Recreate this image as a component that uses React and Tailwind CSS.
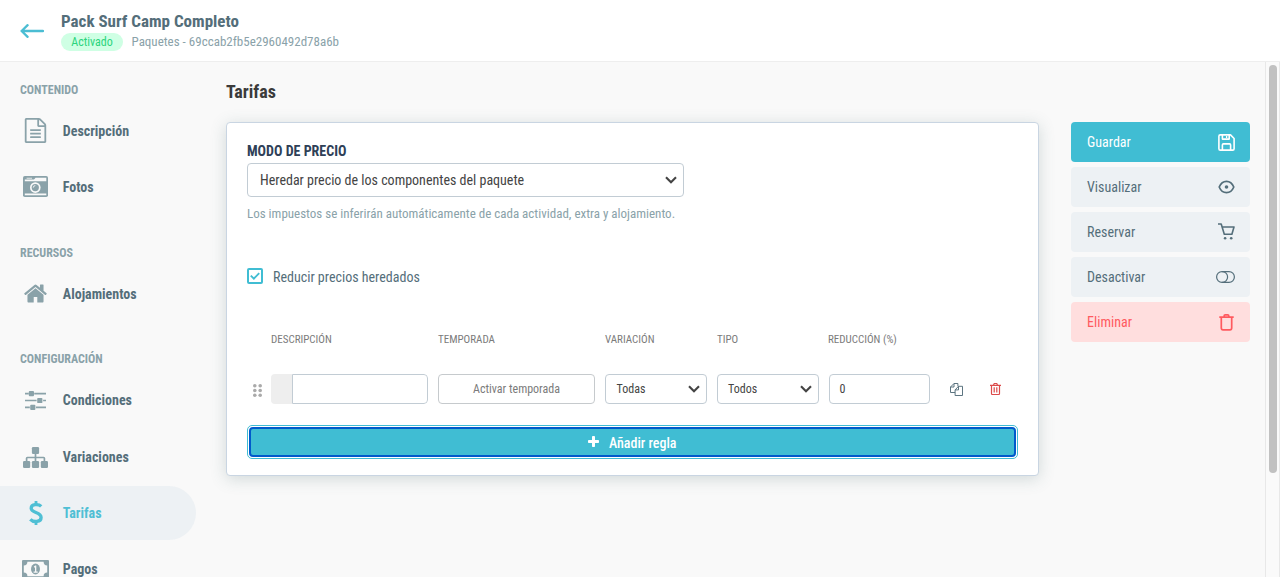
import { useState } from 'react'

const SIDEBAR = [
  {
    title: 'Contenido',
    className: 'h-[163px]',
    items: [
      { label: 'Descripción', icon: FileIcon },
      { label: 'Fotos', icon: CameraIcon },
    ],
  },
  {
    title: 'Recursos',
    className: 'h-[106px]',
    items: [{ label: 'Alojamientos', icon: HomeIcon }],
  },
  {
    title: 'Configuración',
    className: 'h-[250px]',
    items: [
      { label: 'Condiciones', icon: SlidersIcon },
      { label: 'Variaciones', icon: SitemapIcon, className: 'pt-px' },
      { label: 'Tarifas', icon: DollarIcon },
      { label: 'Pagos', icon: MoneyIcon },
    ],
  },
]

const ACTIONS = [
  { label: 'Guardar', icon: SaveIcon, className: 'bg-[#40bdd3] text-white' },
  { label: 'Visualizar', icon: EyeIcon, className: 'bg-[#edf1f4] text-[#546e7a]' },
  { label: 'Reservar', icon: CartIcon, className: 'bg-[#edf1f4] text-[#546e7a]' },
  { label: 'Desactivar', icon: ToggleIcon, className: 'bg-[#edf1f4] text-[#546e7a]' },
  { label: 'Eliminar', icon: TrashIcon, className: 'bg-[#ffdede] text-[#ff5a5f]' },
]

function FileIcon() {
  return (
    <svg width="25" height="25" viewBox="0 0 1792 1792" fill="currentColor" className="-mt-px">
      <path d="M1596 380q28 28 48 76t20 88v1152q0 40-28 68t-68 28H224q-40 0-68-28t-28-68V96q0-40 28-68T224 0h896q40 0 88 20t76 48zm-444-244v376h376q-10-29-22-41l-313-313q-12-12-41-22zm384 1528V640h-416q-40 0-68-28t-28-68V128H256v1536h1280zM512 832q0-14 9-23t23-9h704q14 0 23 9t9 23v64q0 14-9 23t-23 9H544q-14 0-23-9t-9-23v-64zm736 224q14 0 23 9t9 23v64q0 14-9 23t-23 9H544q-14 0-23-9t-9-23v-64q0-14 9-23t23-9h704zm0 256q14 0 23 9t9 23v64q0 14-9 23t-23 9H544q-14 0-23-9t-9-23v-64q0-14 9-23t23-9h704z" />
    </svg>
  )
}

function CameraIcon() {
  return (
    <svg width="25" height="21" viewBox="0 0 25 21" fill="none" className="-mt-0.5">
      <rect width="25" height="21" rx="1.8" fill="currentColor" />
      <path d="M1.8 3.6H11L12.6 1.8H23.3V5.3H1.8zM1.8 17.6H23.3V19.2H1.8z" fill="#f9f9f9" />
      <path d="M3.6 1.8H9V2.6H3.6z" fill="#f9f9f9" />
      <circle cx="12.3" cy="11.6" r="5.3" fill="#f9f9f9" />
      <circle cx="12.3" cy="11.6" r="3.6" fill="currentColor" />
      <path d="M10.3 11.6a2 2 0 0 1 2-2" stroke="#f9f9f9" strokeWidth="0.9" />
    </svg>
  )
}

function HomeIcon() {
  return (
    <svg width="25" height="25" viewBox="0 0 1792 1792" fill="currentColor" className="-mt-0.5">
      <path d="M1472 992v480q0 26-19 45t-45 19h-384v-384H768v384H384q-26 0-45-19t-19-45V992q0-1 .5-3t.5-3l575-474 575 474q1 2 1 6zm223-69l-62 74q-8 9-21 11h-3q-13 0-21-7L896 424l-692 577q-12 8-24 7-13-2-21-11l-62-74q-8-10-7-23.5t11-21.5l719-599q32-26 76-26t76 26l244 204V288q0-14 9-23t23-9h192q14 0 23 9t9 23v408l219 182q10 8 11 21.5t-7 23.5z" />
    </svg>
  )
}

function SlidersIcon() {
  return (
    <svg width="21" height="19" viewBox="0 0 21 19" fill="currentColor">
      <path d="M0 1.8h3.8v1.6H0zM9.2 1.8H21v1.6H9.2zM0 8.7h11.6v1.6H0zM18.1 8.7H21v1.6h-2.9zM0 15.6h4.8v1.6H0zM11 15.6h10v1.6H11z" />
      <rect x="3.8" width="5.2" height="5.2" rx="0.9" />
      <rect x="12.2" y="6.9" width="5.2" height="5.2" rx="0.9" />
      <rect x="5.2" y="13.8" width="5.2" height="5.2" rx="0.9" />
    </svg>
  )
}

function SitemapIcon() {
  return (
    <svg width="25" height="21" viewBox="0 0 25 21" fill="currentColor">
      <rect x="8.9" width="7.2" height="7" rx="1.2" />
      <rect y="14" width="7.2" height="7" rx="1.2" />
      <rect x="8.9" y="14" width="7.2" height="7" rx="1.2" />
      <rect x="17.8" y="14" width="7.2" height="7" rx="1.2" />
      <path d="M12.5 6v9M3.6 15v-3.7q0-.8.8-.8h16.2q.8 0 .8.8V15" fill="none" stroke="currentColor" strokeWidth="1.7" />
    </svg>
  )
}

function DollarIcon() {
  return (
    <svg width="14" height="24" viewBox="0 0 14 24" fill="none" stroke="currentColor" className="-mt-px">
      <path d="M12.2 5.4C9.6 2.8 2.2 2.9 2.2 7.2c0 5 9.9 3.6 9.9 9.2 0 4.8-7.6 5.3-10.8 1.9" strokeWidth="3.3" />
      <path d="M7 0v4M7 20v4" strokeWidth="2.8" />
    </svg>
  )
}

function MoneyIcon() {
  return (
    <svg width="27" height="18" viewBox="0 0 27 18" fill="none" className="-mt-0.5">
      <rect width="27" height="18" rx="1" fill="currentColor" />
      <path d="M5.4 1.8h16.2a3.6 3.6 0 0 0 3.6 3.6v7.2a3.6 3.6 0 0 0-3.6 3.6H5.4a3.6 3.6 0 0 0-3.6-3.6V5.4a3.6 3.6 0 0 0 3.6-3.6z" fill="#f9f9f9" />
      <ellipse cx="13.5" cy="9" rx="4.5" ry="5.4" fill="currentColor" />
      <path d="M11.8 6.8l1.3-1.2h1.2v6h1.4v1.1h-4.1v-1.1h1.4V7.2l-.6.5z" fill="#f9f9f9" />
    </svg>
  )
}

function SaveIcon() {
  return (
    <svg width="17" height="17" viewBox="0 0 17 17" fill="none" stroke="currentColor" strokeWidth="1.6" strokeLinejoin="round">
      <path d="M2.3.9h10.2l3.6 3.6v10.2q0 1.4-1.4 1.4H2.3Q.9 16.1.9 14.7V2.3Q.9.9 2.3.9z" />
      <path d="M4.4 1v4.1h6.8V1M4.4 16v-5.1q0-1 1-1h6.2q1 0 1 1V16" />
      <path d="M8.6 2v2" strokeWidth="1.3" />
    </svg>
  )
}

function EyeIcon() {
  return (
    <svg width="17" height="14" viewBox="0 0 17 14" fill="none" stroke="currentColor" strokeWidth="1.7">
      <path d="M1.2 7C2.7 3.4 5.3 1.3 8.5 1.3S14.3 3.4 15.8 7c-1.5 3.6-4.1 5.7-7.3 5.7S2.7 10.6 1.2 7z" strokeLinejoin="round" />
      <circle cx="8.5" cy="7" r="1.8" fill="currentColor" stroke="none" />
    </svg>
  )
}

function CartIcon() {
  return (
    <svg width="17" height="17" viewBox="0 0 17 17" fill="none" stroke="currentColor" strokeWidth="1.6" className="-mt-px">
      <path d="M0 1h3.2l3.1 10.3h7.6L16 4H4.2" strokeLinejoin="round" />
      <circle cx="7.1" cy="15.2" r="1.3" fill="currentColor" stroke="none" />
      <circle cx="13.2" cy="15.2" r="1.3" fill="currentColor" stroke="none" />
    </svg>
  )
}

function ToggleIcon() {
  return (
    <svg width="19" height="12" viewBox="0 0 19 12" fill="none" stroke="currentColor" strokeWidth="1.2">
      <rect x="0.6" y="0.6" width="17.8" height="10.8" rx="5.4" />
      <path d="M6.2.6a5.4 5.4 0 0 1 0 10.8" />
    </svg>
  )
}

function TrashIcon() {
  return (
    <svg width="15" height="17" viewBox="0 0 15 17" fill="none" stroke="currentColor" strokeWidth="1.7" className="mr-px">
      <path d="M.3 3.2h14.4M2.3 3.2v10.9q0 1.7 1.7 1.7h7q1.7 0 1.7-1.7V3.2M5.2 3.2V1.9q0-1 1-1h2.6q1 0 1 1v1.3" />
    </svg>
  )
}

function CopyIcon() {
  return (
    <svg width="13" height="13" viewBox="0 0 13 13" fill="none" stroke="currentColor" strokeWidth="0.95">
      <path d="M5.1 9.5H.5V4L4 .5h3.9v2.8M4 .5V4H.5" />
      <path d="M5.1 12.5V6.9l3.4-3.6h4v9.2zM8.5 3.3v3.6H5.1" />
    </svg>
  )
}

function SmallTrashIcon() {
  return (
    <svg width="11" height="12" viewBox="0 0 11 12" fill="none" stroke="currentColor">
      <path d="M0 2.4h11M1.5 2.4v8q0 1.1 1 1.1h6q1 0 1-1.1v-8M3.5 2.3L4 .9Q4.2.5 4.6.5h1.8q.4 0 .6.4l.5 1.4M4.2 4.3v5.2M6.8 4.3v5.2" strokeWidth="1.2" />
    </svg>
  )
}

function Chevron() {
  return (
    <svg width="12" height="8" viewBox="0 0 12 8" fill="none" className="shrink-0">
      <path d="M1 1.2l5 5 5-5" stroke="#444" strokeWidth="2.1" />
    </svg>
  )
}

function NavItem({ label, icon: Icon, active, className = '', onClick }) {
  return (
    <button
      onClick={onClick}
      className={`flex h-[54px] w-[196px] shrink-0 items-center rounded-r-full pl-[22px] text-[14px] font-bold ${active ? 'bg-[#edf1f4] text-[#4fbfd4]' : 'text-[#546e7a]'} ${className}`}
    >
      <span className={`flex w-[27px] justify-center ${active ? '' : 'text-[#8aa2a9]'}`}>
        <Icon />
      </span>
      <span className="ml-[13.8px]">{label}</span>
    </button>
  )
}

function Select({ value, className }) {
  return (
    <div className={`flex items-center justify-between rounded-[4px] border border-[#c2ccd4] bg-white ${className}`}>
      <span>{value}</span>
      <Chevron />
    </div>
  )
}

export default function App() {
  const [active, setActive] = useState('Tarifas')
  const [reduce, setReduce] = useState(true)

  return (
    <div className="flex h-[577px] w-[1280px] flex-col overflow-hidden bg-[#f9f9f9] font-['Roboto_Condensed','Roboto',sans-serif] text-[#444] [font-stretch:75%]">
      {/* Header */}
      <header className="flex h-[62px] shrink-0 items-center border-b border-[#eee] bg-white pl-5">
        <svg width="24" height="14" viewBox="0 0 24 14" fill="none" stroke="#4bbdd3" strokeWidth="2.3" strokeLinecap="round" strokeLinejoin="round">
          <path d="M23 7H1.6M7.6 1.2L1.6 7l6 5.8" />
        </svg>
        <div className="ml-[17px] pt-px">
          <h1 className="mb-0.5 text-[17px] leading-5 font-bold text-[#546e7a]">Pack Surf Camp Completo</h1>
          <div className="flex h-[18px] items-center text-[12px] text-[#8aa2a9]">
            <span className="flex h-[18px] w-[62px] items-center justify-center rounded-full bg-[#cfffe4] text-[#2bd47d]">Activado</span>
            <span className="ml-[8.5px] text-[13px]">Paquetes - 69ccab2fb5e2960492d78a6b</span>
          </div>
        </div>
      </header>

      <div className="flex min-h-0 flex-1">
        {/* Sidebar */}
        <nav className="w-[226px] shrink-0 overflow-hidden pt-[18px]">
          {SIDEBAR.map(group => (
            <section key={group.title} className={group.className}>
              <h2 className="mb-1 pl-5 text-[12px] leading-5 font-bold text-[#8aa2a9] uppercase">{group.title}</h2>
              <div className="flex flex-col gap-[2.6px]">
                {group.items.map(item => (
                  <NavItem
                    key={item.label}
                    {...item}
                    active={item.label === active}
                    onClick={() => setActive(item.label)}
                  />
                ))}
              </div>
            </section>
          ))}
        </nav>

        {/* Main panel */}
        <main className="w-[813px] shrink-0 pt-[18px]">
          <h2 className="text-[18px] leading-6 font-bold text-[#3b3b3b]">Tarifas</h2>
          <div className="mt-[18px] h-[354px] rounded-[4px] border border-[#c9d5e2] bg-white px-5 pt-[19px] shadow-[0_3px_16px_rgba(70,105,105,0.22)]">
            <div className="text-[14px] leading-[18px] font-bold text-[#2e4057] uppercase">Modo de precio</div>
            <Select
              value="Heredar precio de los componentes del paquete"
              className="mt-[3px] h-[34px] w-[437px] pr-1.5 pl-3 text-[14px]"
            />
            <p className="mt-2 text-[13px] leading-[18px] text-[#8aa2a9]">
              Los impuestos se inferirán automáticamente de cada actividad, extra y alojamiento.
            </p>

            <button onClick={() => setReduce(!reduce)} className="mt-[44px] flex h-5 items-center text-[14px] text-[#546e7a]">
              <span className="mr-[10px] mb-0.5 flex size-4 items-center justify-center rounded-[2px] border-2 border-[#40bdd3]">
                {reduce && (
                  <svg width="10" height="8" viewBox="0 0 10 8" fill="none" stroke="#40bdd3" strokeWidth="1.9">
                    <path d="M.8 3.6l3.1 3L9.2 1.2" />
                  </svg>
                )}
              </span>
              Reducir precios heredados
            </button>

            <div className="mt-[44px] flex pl-6 text-[11px] leading-[18px] text-[#7b7b7b] uppercase">
              <span className="w-[167px]">Descripción</span>
              <span className="w-[167px]">Temporada</span>
              <span className="w-[112px]">Variación</span>
              <span className="w-[111px]">Tipo</span>
              <span>Reducción (%)</span>
            </div>

            <div className="mt-[25px] flex h-[30px] items-center text-[12px]">
              <svg width="9" height="13" viewBox="0 0 9 13" fill="#aaa" className="mt-[3px] mr-[9px] ml-1.5">
                <circle cx="1.8" cy="1.8" r="1.8" />
                <circle cx="7.2" cy="1.8" r="1.8" />
                <circle cx="1.8" cy="6.5" r="1.8" />
                <circle cx="7.2" cy="6.5" r="1.8" />
                <circle cx="1.8" cy="11.2" r="1.8" />
                <circle cx="7.2" cy="11.2" r="1.8" />
              </svg>
              <div className="flex h-full w-[157px] overflow-hidden rounded-[4px]">
                <div className="w-[21px] bg-[#eee]" />
                <div className="flex-1 rounded-r-[4px] border border-[#c2ccd4]" />
              </div>
              <button className="ml-[10px] h-full w-[157px] rounded-[4px] border border-[#c6cacd] text-[#7b7b7b]">Activar temporada</button>
              <Select value="Todas" className="ml-[10px] h-full w-[102px] pr-1.5 pl-[10.5px]" />
              <Select value="Todos" className="ml-[10px] h-full w-[102px] pr-1.5 pl-[10px]" />
              <div className="ml-[10px] flex h-full w-[101px] items-center rounded-[4px] border border-[#c2ccd4] pl-[9.6px]">0</div>
              <button className="ml-5 text-[#546e7a]"><CopyIcon /></button>
              <button className="ml-[27px] text-[#dc4b4b]"><SmallTrashIcon /></button>
            </div>

            <button className="mt-[21px] flex h-[34px] w-[771px] rounded-[5px] border border-[#40bdd3] bg-white p-px text-[14px] font-medium text-white">
              <span className="flex h-full w-full items-center justify-center rounded-[4px] border-2 border-[#005acb] bg-[#40bdd3] pt-0.5">
                <svg width="11" height="11" viewBox="0 0 11 11" fill="currentColor" className="mr-[9.5px] mb-[3px]">
                  <rect x="4" width="3" height="11" rx="0.8" />
                  <rect y="4" width="11" height="3" rx="0.8" />
                </svg>
                Añadir regla
              </span>
            </button>
          </div>
        </main>

        {/* Actions */}
        <aside className="ml-8 flex w-[179px] shrink-0 flex-col gap-[5px] pt-[60px]">
          {ACTIONS.map(({ label, icon: Icon, className }) => (
            <button key={label} className={`flex h-10 items-center justify-between rounded-[4px] pr-[15px] pl-4 text-[14px] ${className}`}>
              {label}
              <Icon />
            </button>
          ))}
        </aside>

        {/* Scrollbar */}
        <div className="ml-auto w-[15px] border-x border-[#e8e8e8] bg-[#fafafa] pt-[3px] pl-[3px]">
          <div className="h-[408px] w-2 rounded-full bg-[#c1c1c1]" />
        </div>
      </div>
    </div>
  )
}
